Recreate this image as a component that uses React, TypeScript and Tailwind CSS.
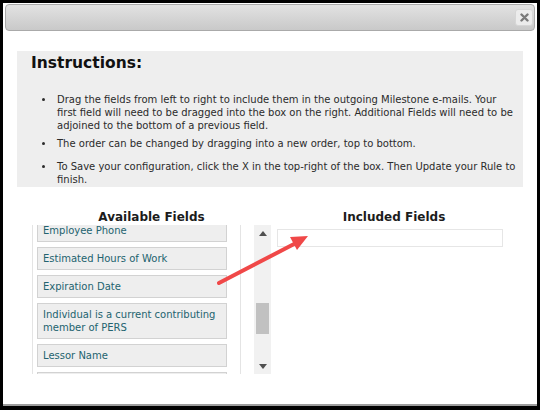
import React from "react";

const availableFields = [
  "Employee Phone",
  "Estimated Hours of Work",
  "Expiration Date",
  "Individual is a current contributing member of PERS",
  "Lessor Name",
  "Lessor Phone",
];

const verdana = { fontFamily: '"DejaVu Sans", Verdana, sans-serif' };

export default function App() {
  return (
    <div
      className="relative w-[540px] h-[410px] bg-black pt-[3px] pl-[3px] overflow-hidden"
      style={verdana}
    >
      <div className="w-[534px] h-[403px] bg-white border-b-2 border-[#9c9c9c] flex flex-col pt-px px-[2px]">
        {/* title bar */}
        <div className="h-[27px] rounded-[4px] border border-[#aaaaaa] bg-gradient-to-b from-[#e2e2e2] to-[#c9c9c9] flex items-center justify-end pr-[1px]">
          <button className="w-[18px] h-[17px] rounded-[3px] border border-[#d6d6d6] bg-[#ececec] flex items-center justify-center">
            <svg width="9" height="9" viewBox="0 0 9 9">
              <path
                d="M1.5 1.5 L7.5 7.5 M7.5 1.5 L1.5 7.5"
                stroke="#7a7a7a"
                strokeWidth="2.4"
                strokeLinecap="round"
              />
            </svg>
          </button>
        </div>

        <div className="px-[12px] pt-[20px]">
          {/* instructions */}
          <div className="h-[136px] bg-[#eeeeee] pl-[14px] pr-0 pt-[2px]">
            <h2 className="text-[15.5px] font-bold text-[#111] leading-[20px]">
              Instructions:
            </h2>
            <ul className="mt-[20px] pl-[24px] text-[10px] leading-[13px] text-[#2b2b2b] list-disc whitespace-nowrap">
              <li className="mb-[5px] pl-[2px]">
                Drag the fields from left to right to include them in the
                outgoing Milestone e-mails. Your
                <br />
                first field will need to be dragged into the box on the right.
                Additional Fields will need to be
                <br />
                adjoined to the bottom of a previous field.
              </li>
              <li className="mb-[10px] pl-[2px]">
                The order can be changed by dragging into a new order, top to
                bottom.
              </li>
              <li className="pl-[2px]">
                To Save your configuration, click the X in the top-right of the
                box. Then Update your Rule to
                <br />
                finish.
              </li>
            </ul>
          </div>

          {/* field columns */}
          <div className="flex mt-[23px]">
            <div className="ml-[15px] w-[239px]">
              <div className="text-center text-[12px] font-bold leading-[15px] text-[#1c1c1c]">
                Available Fields
              </div>
              <div className="flex h-[149px]">
                <div className="w-[209px] border-l border-r border-[#e4e4e4] overflow-hidden pl-[4px] pr-[13px]">
                  <div className="-mt-[6px]">
                    {availableFields.map((f) => (
                      <div
                        key={f}
                        className="mb-[5px] border border-[#d2d2d2] bg-[#eeeeee] px-[5px] py-[4px] text-[10px] leading-[13px] text-[#23636f]"
                      >
                        {f}
                      </div>
                    ))}
                  </div>
                </div>
                {/* scrollbar */}
                <div className="ml-[13px] w-[17px] bg-[#f1f1f1] flex flex-col items-center">
                  <div className="h-[16px] flex items-center justify-center">
                    <svg width="8" height="5" viewBox="0 0 8 5">
                      <path d="M0 5 L4 0 L8 5 Z" fill="#505050" />
                    </svg>
                  </div>
                  <div className="mt-[62px] w-[13px] h-[31px] bg-[#c1c1c1]" />
                  <div className="flex-1" />
                  <div className="h-[16px] flex items-center justify-center">
                    <svg width="8" height="5" viewBox="0 0 8 5">
                      <path d="M0 0 L8 0 L4 5 Z" fill="#505050" />
                    </svg>
                  </div>
                </div>
              </div>
            </div>

            <div className="ml-[6px] w-[234px]">
              <div className="text-center text-[12px] font-bold leading-[15px] text-[#1c1c1c]">
                Included Fields
              </div>
              <div className="mt-[4px] w-[226px] h-[18px] border border-[#e6e6e6]" />
            </div>
          </div>
        </div>
      </div>

      {/* red callout arrow */}
      <svg
        className="absolute left-0 top-0 pointer-events-none"
        width="540"
        height="410"
        viewBox="0 0 540 410"
      >
        <line
          x1="219"
          y1="283"
          x2="296"
          y2="243"
          stroke="#f04848"
          strokeWidth="4"
          strokeLinecap="round"
        />
        <polygon points="308,236 297,250 290,237" fill="#f04848" />
      </svg>
    </div>
  );
}
